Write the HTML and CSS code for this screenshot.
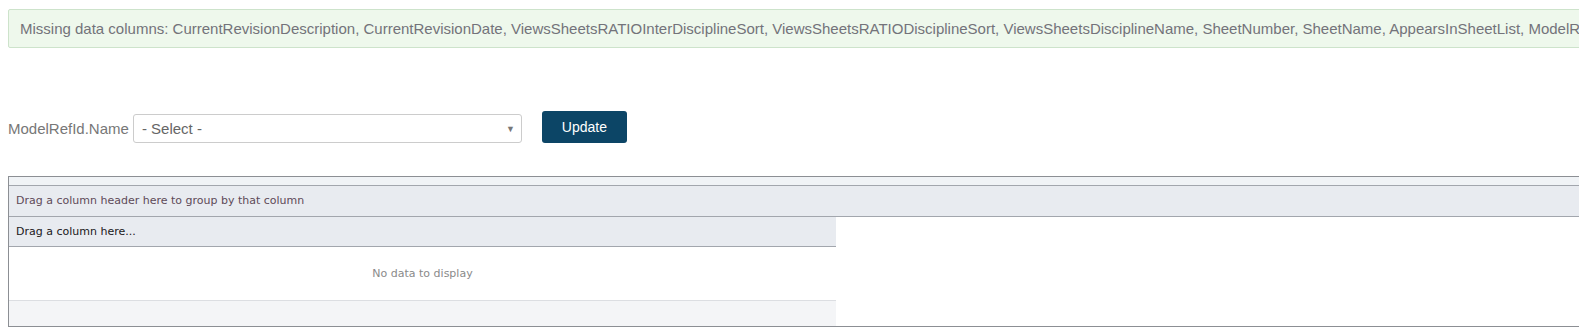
FILE: index.html
```html
<!DOCTYPE html>
<html>
  <head>
    <link rel="stylesheet" href="styles.css">
  </head>

  <body>

    <div class="alert">
      Missing data columns: CurrentRevisionDescription, CurrentRevisionDate, ViewsSheetsRATIOInterDisciplineSort, ViewsSheetsRATIODisciplineSort, ViewsSheetsDisciplineName, SheetNumber, SheetName, AppearsInSheetList, ModelRefId.Name
    </div>

    <div class="filter-row">
      <label class="filter-label">ModelRefId.Name</label>
      <div class="select-box">
        <span>- Select -</span>
        <span class="select-arrow">&#9660;</span>
      </div>
      <button class="update-btn">Update</button>
    </div>

    <div class="grid">
      <div class="grid-top"></div>
      <div class="group-panel">Drag a column header here to group by that column</div>
      <div class="grid-table">
        <div class="header-row">Drag a column here...</div>
        <div class="empty-row">No data to display</div>
        <div class="footer-row"></div>
      </div>
    </div>

  </body>

</html>
```

FILE: styles.css
```css
html, body {
  margin: 0;
  overflow: hidden;
  background: #fff;
}

body {
  padding: 9px 0 0 8px;
  font-family: "Liberation Sans", Arial, sans-serif;
}

.alert {
  width: max-content;
  white-space: nowrap;
  padding: 9px 11px;
  line-height: 19px;
  font-size: 15px;
  color: #73737a;
  background-color: #eef8ec;
  border: 1px solid #cde3cb;
  border-radius: 2px;
}

.filter-row {
  display: flex;
  align-items: flex-end;
  margin-top: 63px;
  height: 32px;
}

.filter-label {
  font-size: 15px;
  color: #777;
  line-height: 29px;
  margin-right: 4px;
}

.select-box {
  display: flex;
  justify-content: space-between;
  align-items: center;
  box-sizing: border-box;
  width: 389px;
  height: 29px;
  padding: 0 6px 0 8px;
  border: 1px solid #ccc;
  border-radius: 3px;
  font-size: 15px;
  color: #666;
}

.select-arrow {
  font-size: 9px;
  color: #777;
}

.update-btn {
  box-sizing: border-box;
  width: 85px;
  height: 32px;
  margin-left: 20px;
  border: none;
  border-radius: 3px;
  background-color: #0c4566;
  color: #fff;
  font-family: "Liberation Sans", Arial, sans-serif;
  font-size: 14px;
}

.grid {
  width: 1640px;
  margin-top: 33px;
  border: 1px solid #8c8f94;
  font-family: "DejaVu Sans", Verdana, sans-serif;
  font-size: 11px;
}

.grid-top {
  height: 8px;
  background-color: #f0f3f6;
  border-bottom: 1px solid #a2a6ad;
}

.group-panel {
  height: 30px;
  line-height: 30px;
  padding-left: 7px;
  background-color: #e8ebf0;
  border-bottom: 1px solid #a2a6ad;
  color: #5e4a58;
}

.grid-table {
  width: 827px;
}

.header-row {
  height: 29px;
  line-height: 29px;
  padding-left: 7px;
  background-color: #e8ebf0;
  border-bottom: 1px solid #a2a6ad;
  color: #201820;
}

.empty-row {
  height: 53px;
  line-height: 53px;
  text-align: center;
  color: #8a8a8a;
  border-bottom: 1px solid #dcdee2;
}

.footer-row {
  height: 25px;
  background-color: #f4f5f7;
}
```
